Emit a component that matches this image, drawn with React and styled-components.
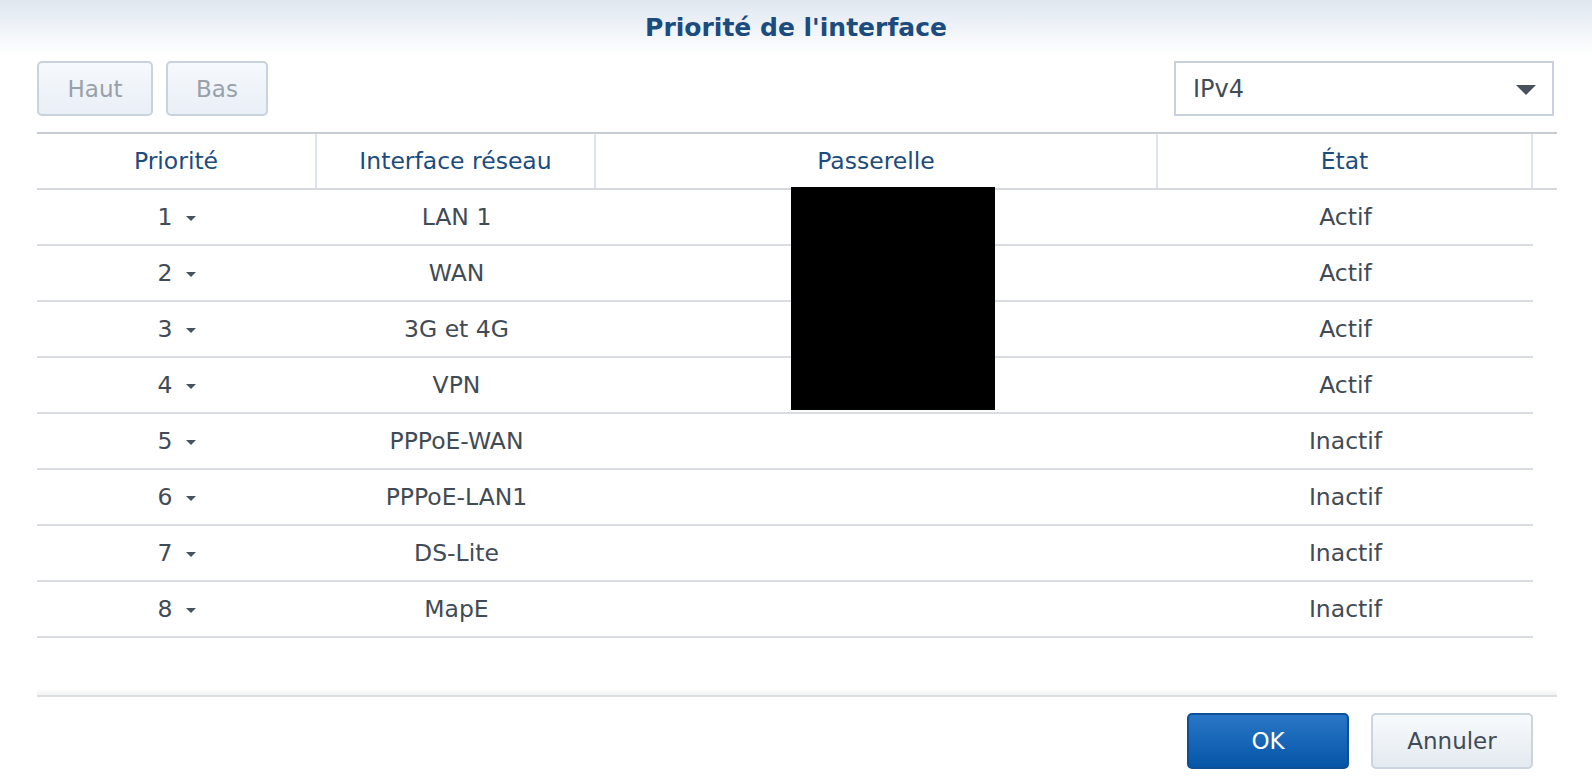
import React from 'react';
import styled, {createGlobalStyle} from 'styled-components';

const GlobalStyle = createGlobalStyle`
  html, body{
    margin: 0;
    padding: 0;
    background: #fff;
  }
  body{
    font-family: "DejaVu Sans", Verdana, sans-serif;
    color: #414b55;
  }
`;

const Dialog = styled.div`
  width: 1592px;
  height: 780px;
  display: flex;
  flex-direction: column;
  background: #fff;
  overflow: hidden;
`;

const TitleBar = styled.div`
  height: 55px;
  display: flex;
  align-items: center;
  justify-content: center;
  background: linear-gradient(to bottom, #dfe7f0 0%, #fff 100%);

  h1{
    margin: 0;
    font-size: 25px;
    font-weight: 700;
    color: #1c4c7e;
  }
`;

const Toolbar = styled.div`
  display: flex;
  align-items: center;
  padding: 6px 38px 0 37px;
  gap: 13px;
`;

const ToolButton = styled.button`
  height: 55px;
  width: ${p => p.$w}px;
  border: 2px solid #c9d3dd;
  border-radius: 5px;
  background: linear-gradient(to bottom, #f6f9fd, #e9eff6);
  color: #98a1aa;
  font-family: inherit;
  font-size: 23px;
  padding: 0;
`;

const Select = styled.div`
  margin-left: auto;
  width: 380px;
  height: 55px;
  box-sizing: border-box;
  border: 2px solid #c9d2dc;
  display: flex;
  align-items: center;
  justify-content: space-between;
  padding: 0 16px 0 17px;
  font-size: 24px;
  color: #414b55;
`;

const Table = styled.div`
  margin: 16px 35px 0 37px;
  position: relative;
`;

const cols = '280px 279px 562px 375px 24px';

const HeadRow = styled.div`
  display: grid;
  grid-template-columns: ${cols};
  height: 54px;
  border-top: 2px solid #c8cdd3;
  border-bottom: 2px solid #d5d9de;
`;

const HeadCell = styled.div`
  display: flex;
  align-items: center;
  justify-content: center;
  color: #1c4c7e;
  font-size: 23.5px;
  border-right: ${p => (p.$last ? 'none' : '2px solid #dfe3f1')};
`;

const BodyRow = styled.div`
  display: grid;
  grid-template-columns: ${cols};
  height: 54px;
  border-bottom: 2px solid #d9dde2;
  width: 1496px;
`;

const Cell = styled.div`
  display: flex;
  align-items: center;
  justify-content: center;
  font-size: 23.5px;
  color: #414b55;
  gap: 14px;
`;

const Caret = styled.span`
  width: 0;
  height: 0;
  border-left: ${p => p.$size}px solid transparent;
  border-right: ${p => p.$size}px solid transparent;
  border-top: ${p => p.$size}px solid #48525c;
  margin-top: 3px;
`;

const Redaction = styled.div`
  position: absolute;
  left: 754px;
  top: 55px;
  width: 204px;
  height: 223px;
  background: #000;
`;

const Spacer = styled.div`
  flex: 1;
`;

const Separator = styled.div`
  margin: 0 35px 0 37px;
  height: 8px;
  background: linear-gradient(to bottom, #fff 0%, #f1f2f3 70%, #dcdee0 75%, #dcdee0 100%);
`;

const Footer = styled.div`
  display: flex;
  justify-content: flex-end;
  gap: 22px;
  padding: 16px 59px 11px 0;
`;

const FooterButton = styled.button`
  width: 162px;
  height: 56px;
  border-radius: 5px;
  font-family: inherit;
  font-size: 23px;
  padding: 0;
  border: 2px solid ${p => (p.$primary ? '#0c4f96' : '#cbd5df')};
  background: ${p => (p.$primary
    ? 'linear-gradient(to bottom, #2a76c6, #0556a8)'
    : 'linear-gradient(to bottom, #f7fafd, #e4eaf0)')};
  color: ${p => (p.$primary ? '#fff' : '#414b55')};
`;

const rows = [
  ['LAN 1', 'Actif'],
  ['WAN', 'Actif'],
  ['3G et 4G', 'Actif'],
  ['VPN', 'Actif'],
  ['PPPoE-WAN', 'Inactif'],
  ['PPPoE-LAN1', 'Inactif'],
  ['DS-Lite', 'Inactif'],
  ['MapE', 'Inactif'],
];

const App = () => {
  return (
    <>
      <GlobalStyle />
      <Dialog>
        <TitleBar>
          <h1>Priorité de l'interface</h1>
        </TitleBar>

        <Toolbar>
          <ToolButton $w={116}>Haut</ToolButton>
          <ToolButton $w={102}>Bas</ToolButton>
          <Select>
            <span>IPv4</span>
            <Caret $size={10} />
          </Select>
        </Toolbar>

        <Table>
          <HeadRow>
            <HeadCell>Priorité</HeadCell>
            <HeadCell>Interface réseau</HeadCell>
            <HeadCell>Passerelle</HeadCell>
            <HeadCell>État</HeadCell>
            <HeadCell $last />
          </HeadRow>
          {rows.map(([name, state], i) => (
            <BodyRow key={name}>
              <Cell>
                <span>{i + 1}</span>
                <Caret $size={5} />
              </Cell>
              <Cell>{name}</Cell>
              <Cell />
              <Cell>{state}</Cell>
            </BodyRow>
          ))}
          <Redaction />
        </Table>

        <Spacer />
        <Separator />
        <Footer>
          <FooterButton $primary>OK</FooterButton>
          <FooterButton>Annuler</FooterButton>
        </Footer>
      </Dialog>
    </>
  );
};

export default App;
